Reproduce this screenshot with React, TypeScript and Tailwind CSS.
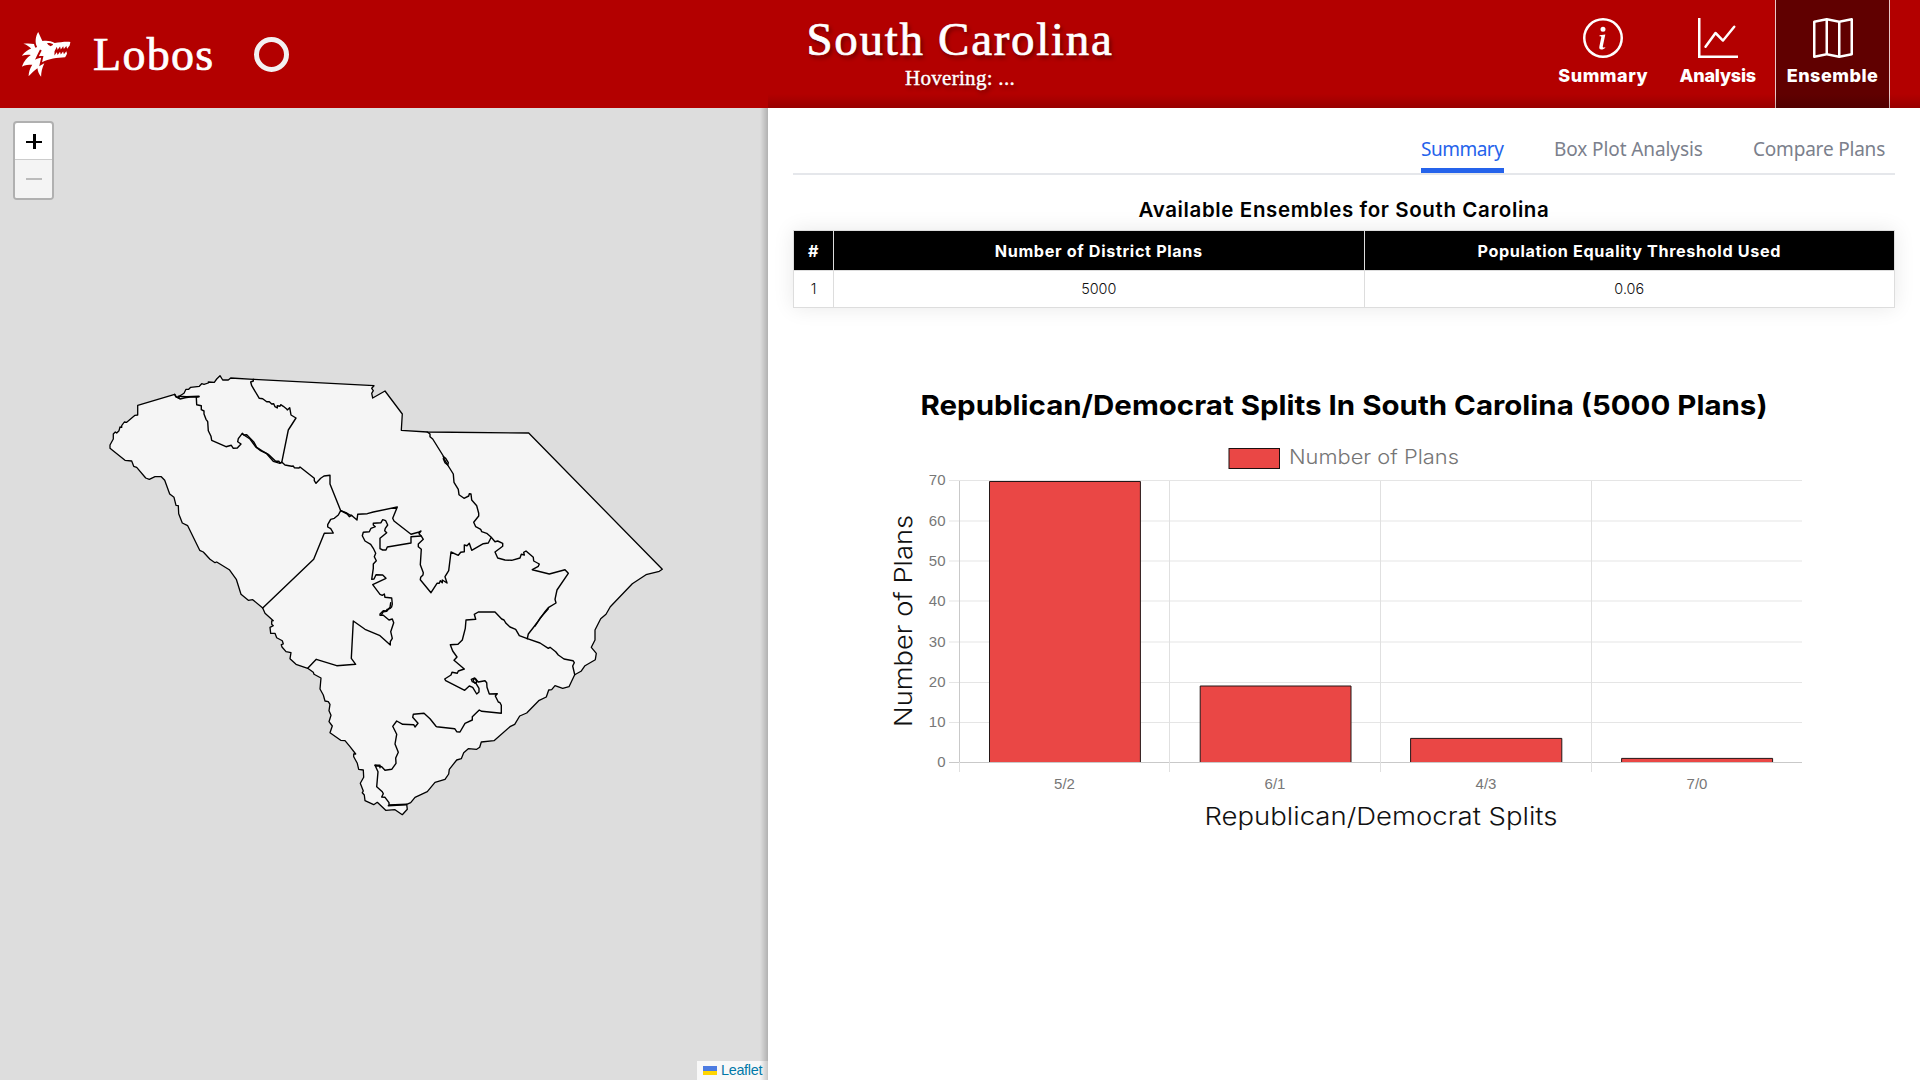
import React from "react";
import { BsInfoCircle, BsGraphUp, BsMap } from "react-icons/bs";
import { GiWolfHead } from "react-icons/gi";

type Segment = [number, number, string];

// Traced coordinates are stored at triple scale, relative to a tile origin.
function trace(segments: Segment[]) {
  const points = segments.flatMap(([ox, oy, data]) =>
    data.split(" ").map((pair) => {
      const [x, y] = pair.split(",").map(Number);
      return `${(ox + x / 3).toFixed(1)} ${(oy + y / 3).toFixed(1)}`;
    }),
  );
  return "M" + points.join("L");
}

const STATE: Segment[] = [
  [100, 252, "235,115 240,107 252,100 258,88 266,88 272,82 298,79 305,71 312,73 325,69 325,66 343,67 350,57 360,47 368,60 385,60 392,54 460,58 822,77 815,85 820,92 815,100 818,114 855,93"],
  [380, 252, "15,93 67,162 64,211 142,216 446,219 847,628 838,634 798,644 757,671 691,740"],
  [430, 452, "528,163 512,176 495,210 495,240 484,262 499,280 496,299 465,317 453,334 434,344 417,380 398,385 375,377 365,389 356,390 349,411 326,422 290,459 269,468 254,493 240,500 192,542 154,546 149,562 140,568 115,566 101,578 94,596 80,600"],
  [250, 482, "598,538 596,552 585,568 555,577 532,605 495,622 482,638 470,643 472,658 457,674 435,659 407,661 382,637 371,644 345,632 343,615 337,608 340,603 331,580 341,562 340,540 326,538 322,520 311,500 311,492 317,492 300,470 285,452 272,451 240,428 247,408 237,395 243,376 237,362 240,343 235,335 225,333 220,315 210,297 213,264 192,253 190,247 173,235 138,223 120,206 123,188 108,185 96,171 94,164 100,162 97,152 80,143 75,130 62,130 60,112 70,107 65,103 65,93 70,92 45,70 38,54"],
  [100, 252, "488,744 458,719 445,721 423,703 409,658 388,629 350,606 345,608 330,598 310,576 299,571 263,497 247,489 236,461 235,437 228,436 222,412 209,402 194,361 184,350 165,350 148,358 137,354 110,322 101,319 95,303 75,301 30,265 30,255 40,237 40,222 46,216 50,219 57,212 60,201 65,202 65,197 73,186 80,187 105,166 113,165 113,136 224,103 230,112 235,115"],
];

const BORDERS: Segment[][] = [
  [[100, 252, "224,103 227,110 235,112 240,117 255,113 270,111 297,110 289,112 290,134 304,137 304,149 312,153 312,162 318,178 323,185 325,212 333,229 335,241 378,260 394,256 400,265 412,264 423,252 413,245 415,236 427,220 432,225 440,224 462,247 470,262 485,272 505,283 527,304 537,304 540,310 545,306 555,315 575,319 580,318 583,323 597,324 600,321 643,355 643,362 648,370 662,355 672,348 690,346 690,372 722,452"]],
  [[100, 252, "427,222 450,237 468,262 480,271 500,281 520,304 540,310"]],
  [[100, 252, "235,109 260,110 297,109"]],
  [[100, 252, "460,58 460,63 452,66 455,77 478,115 488,116 500,125 508,125 515,132 521,131 525,140 532,144 532,137 540,139 542,134 550,139 560,147 562,150 569,143 573,165 588,174 565,210 545,308"]],
  [[100, 252, "722,452 715,465 703,475 692,478 683,494 683,501 692,506 700,519 673,520 641,598 488,744"]],
  [
    [100, 252, "722,452 738,458 750,465 756,467 771,480 773,463 802,461 820,456 892,441 878,475 882,483"],
    [380, 252, "93,523 115,517 123,513 117,521 123,527 130,538 115,552 115,560 124,568 121,614 130,638 129,645 122,652 121,659 153,698 171,670 178,670 181,662 187,668 187,660 201,669 195,650 206,632 213,576 235,586 242,577 253,575 253,555 261,557 268,550 275,571 310,551 325,549 333,533"],
  ],
  [[100, 252, "722,452 742,462 748,470 755,466"]],
  [
    [380, 252, "123,528 93,530 93,549 22,561 18,570"],
    [100, 252, "848,570 840,566 840,535 860,518 854,512 856,505 863,495 857,482 848,479 843,488 820,490 820,495 826,500 813,505 808,515 790,517 787,527 795,543 812,553 820,565 827,580 823,590 829,602 820,612 820,625 815,658 822,657 828,644 848,645 858,655 818,674 840,703"],
    [250, 482, "397,16 403,12 405,22 425,24 427,42 425,50 421,55 412,58 408,63 400,62 390,72 390,76 400,76 417,90 427,87 431,98 422,125 427,145 421,155 421,165 390,137 345,118 310,93 304,205 317,223 260,227 199,208 173,235"],
  ],
  [[250, 482, "422,38 420,52 410,64 400,65 395,73"]],
  [
    [380, 252, "142,216 150,222 150,230 158,237 190,288 193,298 205,318 220,342 222,367 235,388 237,404 252,415 266,408 268,401 273,402 275,420 290,437 296,460 296,468 281,487 287,500 302,508 305,515 320,520 333,531 345,545 353,543 368,550 368,559 345,576 353,594 375,600 395,601 420,594 424,583 433,585 431,577 438,573 460,592 461,603 478,612 475,619 457,629 508,642 555,629 565,640 531,690 525,718"],
    [430, 452, "378,129 355,143 345,155 320,190 295,222 292,236"],
  ],
  [[380, 252, "190,290 197,295 205,308 203,315 195,308 190,296"]],
  [[430, 452, "355,146 330,175 315,198"]],
  [
    [430, 452, "434,344 428,318 433,308 429,302 402,297 385,285 377,275 360,262 355,265 330,249 292,236 268,227 257,208 240,201 228,190 222,180 215,177 195,156 145,156 133,163 137,178 108,180 106,205 97,240 84,253 61,254 68,273 81,291 72,301 103,327 85,333 82,340 66,337 63,345 44,357 47,362 104,391 118,378 128,382 140,402 147,396 147,385 138,370 127,365 124,358 134,354 145,366 165,362 170,368 171,382 178,402 202,401 196,408 205,426 210,428 214,436 214,460 155,454 148,450 127,470 127,480 105,490 90,516 80,515 74,506 20,500"],
    [250, 482, "558,409 540,386 522,370 490,373 488,382 504,400 495,411 491,404 458,403 440,393 428,409 440,433 435,462 445,487 437,504 438,520 425,538 405,541 395,530 375,526 384,545 380,590 397,605 400,611 395,621 405,622 417,638 417,645 470,643"],
  ],
  [[430, 452, "130,362 130,357 137,357 140,367 134,369 130,362"]],
  [[250, 482, "375,526 390,526 390,533"]],
  [[250, 482, "415,647 440,646 468,644"]],
];

function DistrictMap() {
  return (
    <svg viewBox="0 0 768 972" className="block h-[972px] w-[768px]" strokeLinejoin="round" strokeLinecap="round">
      <path d={trace(STATE) + "Z"} fill="#f5f5f5" stroke="#000" strokeWidth={1.3} />
      {BORDERS.map((border, i) => (
        <path key={i} d={trace(border)} fill="none" stroke="#000" strokeWidth={1.4} />
      ))}
    </svg>
  );
}

const BARS = [
  { label: "5/2", x: 989.5, right: 1140.4, top: 481.5, mid: 1064.5 },
  { label: "6/1", x: 1200.2, right: 1351, top: 686, mid: 1275 },
  { label: "4/3", x: 1410.6, right: 1561.8, top: 738.4, mid: 1486 },
  { label: "7/0", x: 1621.6, right: 1772.6, top: 758.4, mid: 1697 },
];
const TICKS = [480.5, 521, 561, 601, 642, 682.5, 722.5, 762.5];

function SplitsChart() {
  return (
    <svg viewBox="880 370 940 470" className="h-[470px] w-[940px]" fontFamily="Inter, 'Liberation Sans', sans-serif">
      <text x={920.5} y={415} fontSize={27.5} fontWeight={700} textLength={847} lengthAdjust="spacingAndGlyphs">
        Republican/Democrat Splits In South Carolina (5000 Plans)
      </text>
      <rect x={1229} y={448.5} width={50.5} height={20} fill="#ea4745" stroke="#1c1010" />
      <text x={1289} y={464} fontSize={19.5} fill="#757575" fontWeight={350} textLength={170} lengthAdjust="spacingAndGlyphs">
        Number of Plans
      </text>
      {TICKS.map((y, i) => (
        <g key={y}>
          <line x1={949} x2={1802} y1={y} y2={y} stroke={i === 7 ? "#c9c9c9" : "#e5e5e5"} />
          <text x={945.5} y={y + 4.6} textAnchor="end" fontFamily="'Liberation Sans', Arial, sans-serif" fontSize={15} fill="#777">
            {70 - i * 10}
          </text>
        </g>
      ))}
      {[959.5, 1169.5, 1380.5, 1591.5].map((x, i) => (
        <g key={x}>
          <line x1={x} x2={x} y1={481} y2={762} stroke={i === 0 ? "#c9c9c9" : "#e0e0e0"} />
          <line x1={x} x2={x} y1={762} y2={772} stroke="#e0e0e0" />
        </g>
      ))}
      {BARS.map((bar) => (
        <g key={bar.label}>
          <rect x={bar.x} y={bar.top} width={bar.right - bar.x} height={762 - bar.top} fill="#ea4745" />
          <path d={`M${bar.x} 762V${bar.top}H${bar.right}V762`} fill="none" stroke="#241717" />
          <text x={bar.mid} y={788.5} textAnchor="middle" fontFamily="'Liberation Sans', Arial, sans-serif" fontSize={15} fill="#777">
            {bar.label}
          </text>
        </g>
      ))}
      <text x={1204.5} y={825} fontSize={24.2} fontWeight={350} fill="#111" textLength={353} lengthAdjust="spacingAndGlyphs">
        Republican/Democrat Splits
      </text>
      <text transform="translate(912 727) rotate(-90)" fontSize={24.2} fontWeight={350} fill="#111" textLength={212} lengthAdjust="spacingAndGlyphs">
        Number of Plans
      </text>
    </svg>
  );
}

function NavItem({
  icon,
  active,
  spacing,
  children,
}: {
  icon: React.ReactNode;
  active?: boolean;
  spacing: string;
  children: React.ReactNode;
}) {
  return (
    <button
      className={
        active
          ? "flex h-full w-[115px] flex-col items-center border-x border-[#e8c8c8] bg-[#600000] pt-[18px]"
          : "flex h-full w-[114.5px] flex-col items-center pt-[18px]"
      }
    >
      <span className="text-[40px]">{icon}</span>
      <span className={`mt-[6px] text-[18px] leading-6 font-extrabold whitespace-nowrap ${spacing}`}>{children}</span>
    </button>
  );
}

function Header() {
  return (
    <header className="relative grid h-[108px] grid-cols-3 bg-[#b30000] font-['Inter','Liberation_Sans',sans-serif] text-white">
      <div className="flex items-center pl-[20px] font-['Liberation_Serif',serif]">
        <GiWolfHead className="size-[52px]" />
        <span className="ml-[21px] text-[46px] tracking-[1.3px] [-webkit-text-stroke:.7px_white]">Lobos</span>
        <span className="ml-[39.5px] size-[35px] rounded-full border-[5px] border-[#f3f0f1]" />
      </div>
      <div className="flex flex-col items-center font-['Liberation_Serif',serif] [text-shadow:2px_3px_4px_rgba(0,0,0,.45)]">
        <h1 className="mt-[12px] text-[47px] leading-[54px] font-normal tracking-[1.7px] whitespace-nowrap [-webkit-text-stroke:.7px_white]">
          South Carolina
        </h1>
        <p className="text-[21px] leading-[24px] tracking-[.3px] [-webkit-text-stroke:.4px_white]">Hovering: ...</p>
      </div>
      <nav className="flex justify-end pr-[30px]">
        <NavItem icon={<BsInfoCircle />} spacing="tracking-[.5px]">
          Summary
        </NavItem>
        <NavItem icon={<BsGraphUp />} spacing="tracking-[-.2px]">
          Analysis
        </NavItem>
        <NavItem icon={<BsMap />} spacing="tracking-[.5px]" active>
          Ensemble
        </NavItem>
      </nav>
      <div className="absolute right-0 bottom-0 left-[768px] h-[14px] bg-linear-to-b from-transparent to-black/15" />
    </header>
  );
}

export default function App() {
  return (
    <div className="h-[1080px] w-[1920px] overflow-hidden bg-white">
      <Header />
      <div className="flex h-[972px]">
        <section className="relative w-[768px] bg-[#ddd]">
          <DistrictMap />
          <div className="absolute top-[13px] left-[13px] w-[41px] overflow-hidden rounded-[4px] border-2 border-[#b0b0b0] bg-white">
            <div className="relative h-[37px] border-b border-[#ccc]">
              <span className="absolute top-[18px] left-[11px] h-[2px] w-[16px] bg-black" />
              <span className="absolute top-[11px] left-[18px] h-[15px] w-[3px] bg-black" />
            </div>
            <div className="relative h-[38px] bg-[#f4f4f4]">
              <span className="absolute top-[18px] left-[11px] h-[2px] w-[16px] bg-[#bbb]" />
            </div>
          </div>
          <div className="absolute right-0 bottom-0 flex h-[19px] w-[71px] items-center gap-[4px] bg-[#f8f8f8] pl-[6px] font-['Liberation_Sans',Arial,sans-serif] text-[14.4px] tracking-[-.3px] text-[#0078a8]">
            <span className="flex h-[9px] w-[14px] flex-col">
              <span className="flex-1 bg-[#4c7be1]" />
              <span className="flex-1 bg-[#ffd500]" />
            </span>
            <span className="leading-none">Leaflet</span>
          </div>
          <div className="absolute inset-y-0 right-0 w-[8px] bg-linear-to-r from-transparent to-black/20" />
        </section>
        <main className="flex w-[1152px] flex-col pr-[25px] pl-[25px] font-['Inter','Liberation_Sans',sans-serif]">
          <div className="flex h-[67px] items-start justify-end gap-[50px] border-b-2 border-[#e5e7eb] pt-[27px] pr-[10px] font-['Noto_Sans',sans-serif] text-[19px] leading-[28px] whitespace-nowrap text-[#7b808c]">
            <span className="h-[38px] w-[83px] border-b-[5px] border-[#2563eb] tracking-[-.5px] text-[#2563eb]">Summary</span>
            <span className="w-[149px] tracking-[-.1px]">Box Plot Analysis</span>
            <span className="w-[132px] tracking-[-.2px]">Compare Plans</span>
          </div>
          <h2 className="mt-[21px] text-center text-[20.5px] leading-[28px] font-semibold tracking-[.62px] whitespace-nowrap">
            Available Ensembles for South Carolina
          </h2>
          <table className="mt-[6px] w-full table-fixed border-collapse text-center shadow-[0_0_20px_rgba(0,0,0,.09)]">
            <colgroup>
              <col className="w-[40px]" />
              <col />
              <col />
            </colgroup>
            <thead>
              <tr className="h-[40px] bg-black text-[16.2px] tracking-[.65px] text-white">
                {["#", "Number of District Plans", "Population Equality Threshold Used"].map((h) => (
                  <th key={h} className="border border-[#ddd] p-0 pt-[2px] font-bold">
                    {h}
                  </th>
                ))}
              </tr>
            </thead>
            <tbody>
              <tr className="h-[37px] bg-white text-[14.4px] font-light text-[#111]">
                {["1", "5000", "0.06"].map((v) => (
                  <td key={v} className="border border-[#ddd] p-0">
                    {v}
                  </td>
                ))}
              </tr>
            </tbody>
          </table>
          <div className="mt-[62px] pl-[87px]">
            <SplitsChart />
          </div>
        </main>
      </div>
    </div>
  );
}
